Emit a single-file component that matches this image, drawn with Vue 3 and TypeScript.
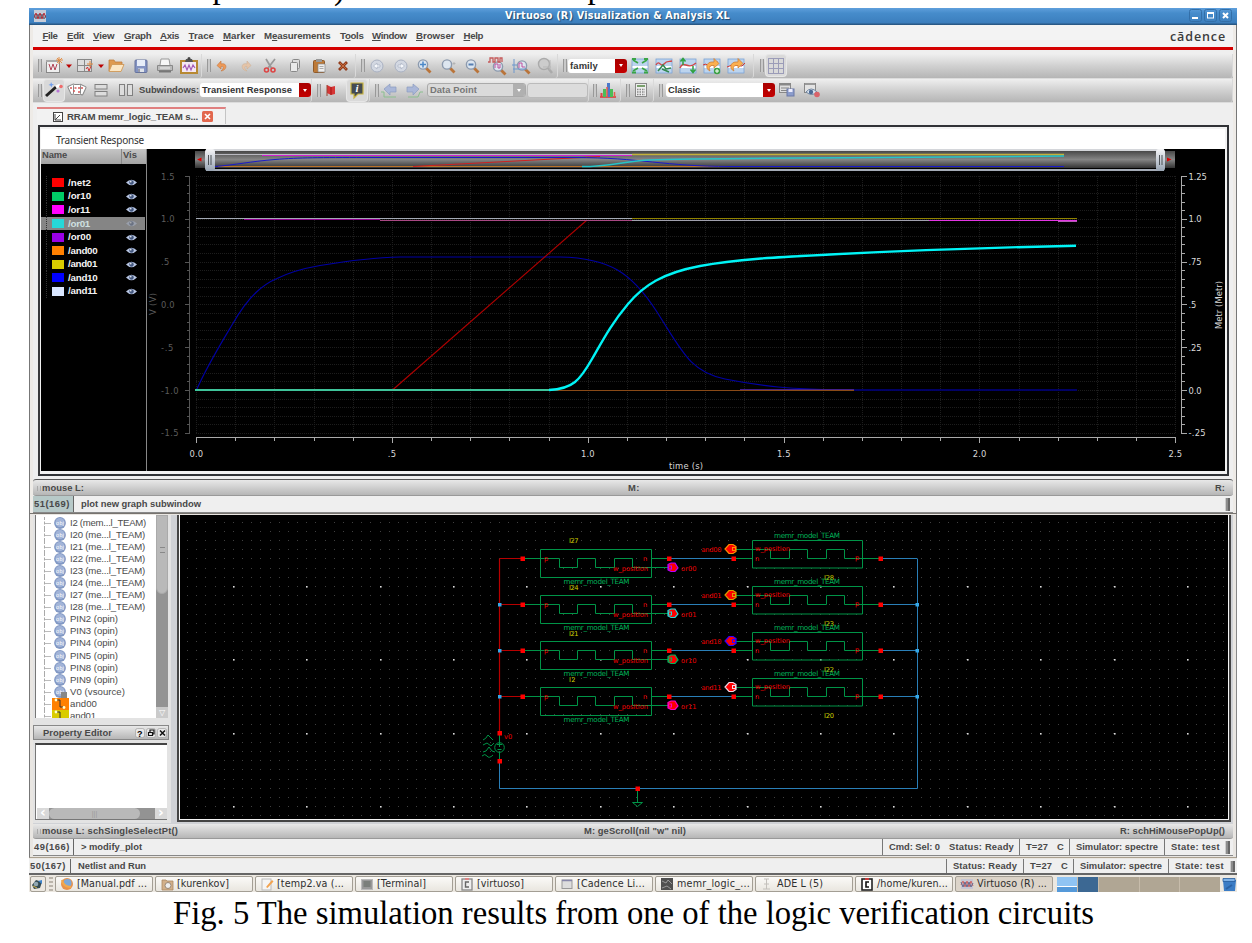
<script setup lang="ts">
interface Tool {
  kind: 'grip' | 'icon' | 'select' | 'label' | 'input'
  c: number
  w: number
  name?: string
  text?: string
  fit?: number
  on?: boolean
  off?: boolean
}
interface Group { x: number; end: number; tools: Tool[] }

// Spreads the difference between natural and wanted width over the letters.
const vFit = {
  mounted(el: HTMLElement, binding: { value: number }) {
    const natural = el.getBoundingClientRect().width
    const count = (el.textContent ?? '').length
    if (count) el.style.letterSpacing = (binding.value - natural) / count + 'px'
  },
}

const grip = (c: number): Tool => ({ kind: 'grip', c, w: 4 })
const icon = (name: string, c: number, on = false): Tool => ({ kind: 'icon', name, c, w: 20, on })
const box = (text: string, from: number, to: number, fit: number, off = false): Tool =>
  ({ kind: 'select', text, c: (from + to) / 2, w: to - from, fit, off })

const rows: Group[][] = [
  [
    { x: 33, end: 202, tools: [grip(40), icon('wave', 53.5), icon('drop', 69), icon('layout', 84.5), icon('drop', 101), icon('folder', 116), icon('save', 141), icon('print', 165), icon('clip', 189)] },
    { x: 202, end: 356, tools: [grip(209), icon('undo', 222), icon('redo', 246), icon('cut', 270), icon('copy', 295), icon('paste', 319), icon('delete', 343)] },
    { x: 356, end: 558, tools: [grip(363), icon('back', 376.5), icon('forward', 400.5), icon('zoomFit', 424), icon('zoomIn', 448), icon('zoomOut', 472), icon('zoomY', 497), icon('zoomX', 521), icon('zoomOff', 545)] },
    { x: 558, end: 754, tools: [grip(565), box('family', 568, 627, 28), icon('fitAll', 640), icon('fitCurve', 664), icon('fitUp', 688), icon('loopPlus', 712), icon('loop', 736)] },
    { x: 754, end: 1233, tools: [grip(762), icon('grid', 776, true)] },
  ],
  [
    { x: 33, end: 312, tools: [grip(40), icon('wand', 53.5, true), icon('cards', 77), icon('rows', 101), icon('cols', 126), { kind: 'label', text: 'Subwindows:', c: 169, w: 60, fit: 60 }, box('Transient Response', 200, 311, 90)] },
    { x: 312, end: 370, tools: [grip(319), icon('flag', 331), icon('info', 357, true)] },
    { x: 370, end: 589, tools: [grip(377), icon('prev', 391), icon('next', 414), box('Data Point', 427, 526, 47, true), { kind: 'input', c: 557, w: 61 }] },
    { x: 589, end: 621, tools: [grip(595), icon('histogram', 608)] },
    { x: 621, end: 654, tools: [grip(628), icon('calc', 641)] },
    { x: 654, end: 1233, tools: [grip(661), box('Classic', 666, 775, 32), icon('saveView', 787), icon('hideView', 812)] },
  ],
]
const gap = (g: Group, i: number) => {
  const t = g.tools[i]
  const p = g.tools[i - 1]
  return t.c - t.w / 2 - (p ? p.c + p.w / 2 : g.x)
}

const lens = '<path d="M12 12l4.500 4.500" stroke="#b9743a" stroke-width="2.800"/><circle cx="9" cy="8.500" r="4.600" fill="#dde6f0" stroke="#8c9aae" stroke-width="1.400"/>'
const card = '<rect x="2" y="3" width="16" height="14" fill="#bcd4ee" stroke="#7ba3d6" stroke-width=".8"/><path d="M2.500 11h15" stroke="#fff" stroke-width="2"/>'
const loopArrow = '<path d="M8 15C3 13 4 6 10 6h2V2.500l5 5-5 4.500V9.500h-2c-2.500 0-3.500 3-2 5.500z" fill="#fbb050" stroke="#cf8038" stroke-width=".8"/>'
const icons: Record<string, string> = {
  wave: '<rect x="2.500" y="5.500" width="13" height="11" fill="#eee" stroke="#888"/><path d="M2 5h14" stroke="#aaa" stroke-width="2"/><path d="M5 8l2 6 2-6 2 6 2-6" fill="none" stroke="#b34557"/><path d="M15 1v7M12 4h7M13 2l5 5M18 2l-5 5" stroke="#e2883c" stroke-width=".9"/>',
  drop: '<path d="M7 8.500h6l-3 3.500z" fill="#b00"/>',
  layout: '<rect x="2.500" y="3.500" width="14" height="12" fill="#ddd" stroke="#888"/><path d="M3 9.500h13M9.500 4v11" stroke="#888"/><path d="M11 13l1.500-2 1.500 4 2-5" fill="none" stroke="#c33"/><path d="M15 5v6M12 8h6" stroke="#e08a40"/>',
  folder: '<path d="M3 15V4h5l1 2h7v3" fill="#de9a50" stroke="#c07f3c" stroke-width=".8"/><path d="M3 15.500L6 8.500h12l-3 7z" fill="#fbe6c4" stroke="#cf9858" stroke-width=".9"/>',
  save: '<rect x="4" y="4" width="12" height="12.500" rx="1" fill="#8393c2" stroke="#66739c"/><path d="M6 4h8v6H6z" fill="#e7edf8"/><path d="M7 12.500h6V16H7z" fill="#dfe3ea"/><path d="M8 13v3" stroke="#556"/>',
  print: '<path d="M5 9l1-6h8l1 6" fill="#f7f7f7" stroke="#999"/><path d="M2.500 9.500h15v5h-15z" fill="#bbb" stroke="#888"/><path d="M4 15.500h12" stroke="#777" stroke-width="2"/><path d="M5 12h10" stroke="#eee"/>',
  clip: '<rect x="2" y="5" width="16" height="12" fill="#f4e8f4" stroke="#b78933" stroke-width="2"/><path d="M6 6l1-3h6l1 3z" fill="#555"/><circle cx="10" cy="2.500" r="1.500" fill="#444"/><path d="M4 12l2-3 2 5 2-5 2 5 2-5 2 3" fill="none" stroke="#a45ab5" stroke-width="1.200"/>',
  undo: '<path d="M9 15c7-1 6-9 0-7V5L5 9.500 9 13v-2.500c3-1 3 2 0 4.500z" fill="#ee9a58" stroke="#c4743c" stroke-width=".6"/>',
  redo: '<path d="M11 15c-7-1-6-9 0-7V5l4 4.500-4 3.500v-2.500c-3-1-3 2 0 4.500z" fill="#e5c4a8" stroke="#ccb095" stroke-width=".6"/>',
  cut: '<path d="M6 3l6 10M15 3L8 12" stroke="#999" stroke-width="1.700"/><circle cx="6.500" cy="14" r="2" fill="none" stroke="#d44" stroke-width="1.600"/><circle cx="13" cy="14" r="2" fill="none" stroke="#d44" stroke-width="1.600"/>',
  copy: '<rect x="7.500" y="3.500" width="7" height="9" rx="1" fill="#ddd" stroke="#888"/><rect x="5.500" y="6.500" width="7" height="9" rx="1" fill="#e9e9e9" stroke="#888"/>',
  paste: '<rect x="4.500" y="4.500" width="11" height="12" rx="1" fill="#bd7a38" stroke="#8f5a2a"/><path d="M7 3h6v3H7z" fill="#999"/><path d="M9 8h7v8H9z" fill="#eee" stroke="#888" stroke-width=".7"/><path d="M10.500 10.500h4M10.500 12.500h4" stroke="#aaa"/>',
  delete: '<path d="M6 6l8 8M14 6l-8 8" stroke="#923d1c" stroke-width="2.800"/><path d="M7 7l6 6M13 7l-6 6" stroke="#c56b3c"/>',
  back: '<circle cx="10" cy="10" r="6" fill="#d3d8e2" stroke="#a9b1c2"/><path d="M6.500 10l3.500-3v2h3v2h-3v2z" fill="#f6f8fc" stroke="#a9b1c2" stroke-width=".7"/>',
  forward: '<circle cx="10" cy="10" r="6" fill="#d3d8e2" stroke="#a9b1c2"/><path d="M13.500 10L10 7v2H7v2h3v2z" fill="#f6f8fc" stroke="#a9b1c2" stroke-width=".7"/>',
  zoomFit: lens + '<path d="M6 8.500h6M9 5.500v6" stroke="#4b88c8" stroke-width="1.500"/>',
  zoomIn: lens + '<path d="M16 6v3M14.500 7.500h3" stroke="#aaa" stroke-width=".7"/>',
  zoomOut: lens + '<path d="M6.500 8.500h5" stroke="#557eb2" stroke-width="2"/>',
  zoomY: '<g transform="translate(2 2)">' + lens + '</g><path d="M1 6h2V2h3v4h2V2h3v4h2V2h2v4" fill="none" stroke="#c55a5a" stroke-width="1.300"/><path d="M8 12V8h3v4h2V8" fill="none" stroke="#c0519f"/>',
  zoomX: '<g transform="translate(2 1)">' + lens + '</g><path d="M3 3v14M1 9h5M2 13h14" stroke="#6c97cc"/><path d="M8 12V7h3v4h3" fill="none" stroke="#c0519f"/>',
  zoomOff: '<circle cx="9" cy="8" r="5.500" fill="#ccc" stroke="#aaa" stroke-width="1.400"/><path d="M13 12l4 5" stroke="#aaa" stroke-width="2.500"/><path d="M15 4v10M8 11h8" stroke="#b7b7b7"/>',
  fitAll: card + '<path d="M3 4l5 3M17 4l-5 3M3 15l5-3M17 15l-5-3" stroke="#3aa545" stroke-width="1.700"/><path d="M2 3h4M14 3h4M2 16.500h4M14 16.500h4" stroke="#3aa545" stroke-width="2"/>',
  fitCurve: card + '<path d="M2 9c3-6 5 3 8-1s5-2 8-3" fill="none" stroke="#d04848" stroke-width="1.400"/><path d="M4 15l5-6 3 4 5-1M8 13l7 3" fill="none" stroke="#32884f" stroke-width="1.500"/>',
  fitUp: card + '<path d="M2 12c4-9 7 3 16-5" fill="none" stroke="#d04848" stroke-width="1.500"/><path d="M5 9V3M2.500 5.500L5 2.500 7.500 5.500M15 10v6M12.500 13.500L15 16.500 17.500 13.500" fill="none" stroke="#2fa040" stroke-width="1.500"/>',
  loopPlus: card + '<path d="M1 9l3-1 3 3 4-3 5-2" fill="none" stroke="#d03535"/>' + loopArrow + '<circle cx="15" cy="15" r="3.200" fill="#3ba043"/><path d="M13 15h4M15 13v4" stroke="#fff"/>',
  loop: card + '<path d="M1 11l5-2 10 1 3-3" fill="none" stroke="#d03535"/>' + loopArrow,
  grid: '<path d="M2.500 2v16M7.500 2v16M12.500 2v16M17.500 2v16M2 2.500h16M2 7.500h16M2 12.500h16M2 17.500h16" stroke="#9b9cb8"/>',
  wand: '<path d="M2 16L12 7" stroke="#222" stroke-width="3"/><path d="M12 7l4-2" stroke="#fff" stroke-width="3"/><path d="M7 2l1 2 2 .5-2 1-.5 2-1-2-2-.500 2-1z" fill="#6f9dec"/><circle cx="17" cy="6.500" r="1.800" fill="#ef6b6b"/><circle cx="14" cy="11" r="1.600" fill="#b978d6"/>',
  cards: '<rect x="2" y="5" width="7" height="9" rx="1" fill="#fff" stroke="#888" transform="rotate(-25 5 9)"/><rect x="11" y="5" width="7" height="9" rx="1" fill="#fff" stroke="#888" transform="rotate(25 14 9)"/><rect x="6.500" y="4.500" width="7" height="10" rx="1" fill="#fff" stroke="#888"/><path d="M3 8h2M7.500 8h2M11 8h2M14 8h2M6 11h2M11 12h2" stroke="#d85a5a" stroke-width="1.700"/>',
  rows: '<rect x="4" y="4.500" width="12" height="4.500" fill="#ddd" stroke="#808080"/><rect x="4" y="11.500" width="12" height="4.500" fill="#ddd" stroke="#808080"/>',
  cols: '<rect x="3.500" y="4.500" width="5" height="11" fill="#ddd" stroke="#808080"/><rect x="11.500" y="4.500" width="5" height="11" fill="#ddd" stroke="#808080"/>',
  flag: '<path d="M6 5l4 2 4-1v8l-4 1-4-2z" fill="#d63636"/><path d="M6 5v11" stroke="#943"/><path d="M10 7v8" stroke="#a31313"/>',
  info: '<path d="M4 3h12v11h-5l-4 4v-4H4z" fill="#444b52" stroke="#c9b541" stroke-width="1.200"/><text x="8.500" y="12" font-family="Liberation Serif, serif" font-size="11" font-weight="bold" font-style="italic" fill="#fff">i</text>',
  prev: '<path d="M3 9l6-5v3h6v5H9v3z" fill="#aab7d8" stroke="#8a9bc0" stroke-width=".7"/><path d="M0 12h3M3 12v5h12" fill="none" stroke="#8abf8e"/>',
  next: '<path d="M15 9L9 4v3H3v5h6v3z" fill="#aab7d8" stroke="#8a9bc0" stroke-width=".7"/><path d="M4 17h10l2-5h3" fill="none" stroke="#8abf8e"/>',
  histogram: '<path d="M2 17h16" stroke="#d33" stroke-width="1.500"/><path d="M3.500 17v-4" stroke="#d44" stroke-width="2"/><path d="M6.500 17V9M13.500 17V9" stroke="#4bbd57" stroke-width="3"/><path d="M10.500 17V3" stroke="#4c78ca" stroke-width="3"/><path d="M9 17V7M16.500 17v-5" stroke="#e65c4b" stroke-width="1.500"/>',
  calc: '<rect x="4.500" y="3.500" width="11" height="13" fill="#eee" stroke="#888"/><rect x="6" y="5" width="8" height="2" fill="#7aa06d"/><path d="M6 9.500h8M6 12h8M6 14.500h8" stroke="#888" stroke-width="1.300" stroke-dasharray="1.500 1"/>',
  saveView: '<rect x="2.500" y="3.500" width="11" height="9" fill="#dedede" stroke="#888"/><path d="M3 4.500h10" stroke="#888" stroke-width="2"/><path d="M4 8h8M4 10.500h8" stroke="#888"/><rect x="10" y="9" width="7" height="7" fill="#8b9ccc" stroke="#6a78a6"/><path d="M11.500 9h4v3h-4z" fill="#eef"/>',
  hideView: '<rect x="2.500" y="3.500" width="11" height="9" fill="#e3e3e3" stroke="#888"/><path d="M3 4h10" stroke="#999" stroke-width="2"/><path d="M4 12q5-6 11 0-5 5-11 0z" fill="#dbe5f1" stroke="#7085a0"/><circle cx="9" cy="12" r="2.200" fill="#4c6a94"/><circle cx="15" cy="14.500" r="2.800" fill="#d9636a"/>',
}

const menu = [
  ['', 'F', 'ile', 42.5, 57.5], ['', 'E', 'dit', 67, 84], ['', 'V', 'iew', 93, 114.5], ['', 'G', 'raph', 124, 151.5],
  ['', 'A', 'xis', 160, 179], ['', 'T', 'race', 188.5, 214], ['', 'M', 'arker', 223, 255], ['M', 'e', 'asurements', 264, 330.5],
  ['T', 'o', 'ols', 340, 363.5], ['', 'W', 'indow', 372, 406.5], ['', 'B', 'rowser', 416, 454.5], ['', 'H', 'elp', 463.5, 483],
] as [string, string, string, number, number][]

const legend = [
  ['/net2', '#ff0000', 23], ['/or10', '#00cc66', 23], ['/or11', '#ff00ff', 22], ['/or01', '#26d9d9', 22], ['/or00', '#9900e6', 23],
  ['/and00', '#ff8000', 29.5], ['/and01', '#d9cc00', 29], ['/and10', '#0000ff', 29.5], ['/and11', '#d9e6ff', 29],
] as [string, string, number][]

const X0 = 196
const seq = (n: number) => Array.from({ length: n }, (_, i) => i)
const gridY = seq(31).map(i => Math.round(176 + i * 8.56) + 0.5)
const gridX = seq(26).map(i => Math.round(196 + i * 39.17) + 0.5)
const leftLabels = ['1.5', '1.0', '.5', '0.0', '-.5', '-1.0', '-1.5']
const rightLabels = ['1.25', '1.0', '.75', '.5', '.25', '0.0', '-.25']
const xLabels = ['0.0', '.5', '1.0', '1.5', '2.0', '2.5']
const labelWidth = (s: string) => [...s].reduce((a, ch) => a + (ch === '.' ? 3 : ch === '-' ? 4 : 5.3), 0)

const smallDots = seq(114).flatMap(i => seq(33).map(j => `M${Math.round(187 + i * 9.17)} ${Math.round(521.8 + j * 9.17)}h1v1h-1z`)).join('')
const bigDots = seq(14).flatMap(i => seq(4).map(j => [Math.round(232.8 + i * 73.4), Math.round(585.8 + j * 73.4)]))

const cells = [
  { y: 558.5, l: 'I27', out: 'or00', oc: '#b400ff', and: 'and00', ac: '#ff9000', r: 'I28', dy: -16 },
  { y: 604.5, l: 'I24', out: 'or01', oc: '#26d9d9', and: 'and01', ac: '#d9a000', r: 'I23', dy: -15 },
  { y: 650.5, l: 'I21', out: 'or10', oc: '#00b35c', and: 'and10', ac: '#3300ff', r: 'I22', dy: -15 },
  { y: 696.5, l: 'I2', out: 'or11', oc: '#ff00c8', and: 'and11', ac: '#f2d9e6', r: 'I20', dy: -15 },
]

const tree = [
  ['I2 (mem...l_TEAM)', 76], ['I20 (me...l_TEAM)', 75], ['I21 (me...l_TEAM)', 75], ['I22 (me...l_TEAM)', 75], ['I23 (me...l_TEAM)', 75],
  ['I24 (me...l_TEAM)', 75], ['I27 (me...l_TEAM)', 75], ['I28 (me...l_TEAM)', 75], ['PIN2 (opin)', 48], ['PIN3 (opin)', 48], ['PIN4 (opin)', 48],
  ['PIN5 (opin)', 48], ['PIN8 (opin)', 48], ['PIN9 (opin)', 48], ['V0 (vsource)', 55], ['and00', 27], ['and01', 26],
] as [string, number][]

const tasks = [
  { t: '[Manual.pdf ...', w: 70, i: '<circle cx="7" cy="7" r="6" fill="#e8924c"/><circle cx="7.500" cy="6" r="4" fill="#7da8d8"/><path d="M2 3q1 7 9 7" fill="none" stroke="#f3a84b" stroke-width="2"/>' },
  { t: '[kurenkov]', w: 52, i: '<path d="M2 3h4l1 1h6v9H2z" fill="#d2b08a" stroke="#a98963" stroke-width=".8"/><circle cx="8" cy="8.500" r="3" fill="#eee" stroke="#987"/>' },
  { t: '[temp2.va (...', w: 67, i: '<rect x="2" y="2" width="9" height="11" fill="#f5f5f5" stroke="#bbb"/><path d="M6 10l6-7 1.500 1.500-6 6.500z" fill="#f2a350"/>' },
  { t: '[Terminal]', w: 49, i: '<rect x="1.500" y="2.500" width="11" height="10" fill="#999" stroke="#bbb"/><rect x="3.500" y="4" width="7" height="6" fill="#7b7f7b"/>' },
  { t: '[virtuoso]', w: 47, i: '<rect x="2" y="2" width="10" height="11" fill="#eee" stroke="#888" stroke-width="1.300"/><path d="M9 5H5.500v5H9" fill="none" stroke="#666" stroke-width="1.400"/><path d="M5 2h4" stroke="#e77" stroke-width="1.500"/>' },
  { t: '[Cadence Li...', w: 68, i: '<rect x="2" y="3" width="10" height="8.500" fill="#ddd" stroke="#999"/><path d="M2 3.500h10" stroke="#88a" stroke-width="1.500"/>' },
  { t: 'memr_logic_...', w: 73, i: '<rect x="1" y="1" width="12" height="12" fill="#505050"/><path d="M2 4l4 2 2-3 4 4M2 11l5-2 4 3" fill="none" stroke="#999"/>' },
  { t: 'ADE L (5)', w: 46, i: '<path d="M4 2h5M6.500 2v10M3 12h7M4 7h5" stroke="#c3c0bb"/>' },
  { t: '/home/kuren...', w: 71, i: '<rect x="2" y="2" width="10" height="11" fill="#fff" stroke="#222" stroke-width="1.600"/><path d="M9 5H6v5h3" fill="none" stroke="#111" stroke-width="1.600"/><path d="M5 2h4" stroke="#e33" stroke-width="1.500"/>' },
  { t: 'Virtuoso (R) ...', w: 70, i: '<rect x="1" y="2" width="12" height="10" fill="#c6c6d4"/><path d="M1 8l2-4 2 6 2-6 2 6 2-6 2 5" fill="none" stroke="#cc6666"/><path d="M1 5l2 5 2-5 2 5 2-5 2 5 2-4" fill="none" stroke="#66668c"/>' },
]
</script>

<template>
  <div class="page">
    <svg class="lead" width="1252" height="8" viewBox="0 0 1252 8">
      <text x="212.500" y="-2">p</text><text x="334" y="-1">)</text><text x="587.500" y="-2">p</text>
    </svg>

    <div class="desk">
      <section class="upper">
        <header class="titlebar">
          <svg class="title-icon" width="12" height="12" viewBox="0 0 12 12"><rect width="12" height="12" fill="#c6ccd8" /><path d="M0 8l2-5 2 6 2-6 2 6 2-6 2 5" fill="none" stroke="#b9303a" /><path d="M0 4l2 5 2-5 2 5 2-5 2 5 2-4" fill="none" stroke="#445" stroke-width=".7" /></svg>
          <span class="title"><span v-fit="225" class="t">Virtuoso (R) Visualization &amp; Analysis XL</span></span>
          <svg width="46" height="14" viewBox="0 0 46 14">
            <g fill="none" stroke="#336fa8"><rect x="1.500" y=".500" width="12" height="12" rx="2" /><rect x="16.500" y=".500" width="12" height="12" rx="2" /><rect x="31.500" y=".500" width="12" height="12" rx="2" /></g>
            <path d="M4 9h6" stroke="#fff" stroke-width="2" /><rect x="19.500" y="4" width="6" height="5" fill="none" stroke="#fff" /><path d="M19 4h7" stroke="#fff" stroke-width="2" /><path d="M35 4l5 5M40 4l-5 5" stroke="#fff" stroke-width="2" />
          </svg>
        </header>
        <div class="frame">
          <nav class="menu">
            <span v-for="(m, i) in menu" :key="i" class="item" :style="{ marginLeft: m[3] - (i ? menu[i - 1][4] : 33) + 'px', width: m[4] - m[3] + 'px' }"><span v-fit="m[4] - m[3]" class="t">{{ m[0] }}<u>{{ m[1] }}</u>{{ m[2] }}</span></span>
            <span class="brand"><span v-fit="56" class="t">cādence</span></span>
          </nav>
          <div class="toolbars">
            <div v-for="(row, r) in rows" :key="r" class="toolbar">
              <div v-for="(g, gi) in row" :key="gi" class="group" :style="{ width: g.end - g.x + 'px' }">
                <div v-for="(t, ti) in g.tools" :key="ti" :class="['tool', t.kind, { on: t.on, off: t.off }]" :style="{ marginLeft: gap(g, ti) + 'px', width: t.w + 'px' }">
                  <svg v-if="t.kind === 'icon'" width="20" height="20" viewBox="0 0 20 20"><g v-html="icons[t.name!]" /></svg>
                  <span v-else-if="t.text" v-fit="t.fit!" class="t">{{ t.text }}</span>
                  <i v-if="t.kind === 'select'" class="caret" />
                </div>
              </div>
            </div>
          </div>
          <div class="tabs">
            <div class="tab">
              <svg width="10" height="10" viewBox="0 0 10 10"><rect x=".500" y=".500" width="9" height="9" fill="#fff" stroke="#444" /><path d="M2 8l5-5M2 2v6h6" fill="none" stroke="#444" /></svg>
              <span v-fit="131" class="t">RRAM memr_logic_TEAM s...</span>
              <svg width="11" height="11" viewBox="0 0 11 11"><rect width="11" height="11" rx="1.500" fill="#e2674d" /><path d="M3 3l5 5M8 3L3 8" stroke="#fff" stroke-width="1.600" /></svg>
            </div>
          </div>
          <div class="graph">
            <div class="graph-title"><span v-fit="88" class="t">Transient Response</span></div>
            <div class="graph-body">
              <aside class="legend">
                <div class="legend-head"><span class="col-name"><span v-fit="25" class="t">Name</span></span><span class="col-vis"><span v-fit="14" class="t">Vis</span></span></div>
                <div v-for="(l, i) in legend" :key="i" :class="['entry', { picked: i === 3 }]">
                  <i class="branch" /><i class="swatch" :style="{ background: l[1] }" />
                  <span class="entry-name"><span v-fit="l[2]" class="t">{{ l[0] }}</span></span>
                  <svg width="11" height="7" viewBox="0 0 11 7"><path d="M0 3.500Q5.500-2 11 3.500 5.500 9 0 3.500z" fill="#b9c7e4" /><circle cx="5.500" cy="3.500" r="2.200" fill="#44587f" /><circle cx="4.800" cy="2.800" r=".8" fill="#fff" /></svg>
                </div>
              </aside>
              <svg class="plot" width="1078" height="322" viewBox="147 149 1078 322">
                <defs>
                  <linearGradient id="slide" x2="0" y2="1"><stop offset="0" stop-color="#484848" /><stop offset=".5" stop-color="#858585" /><stop offset="1" stop-color="#333" /></linearGradient>
                  <linearGradient id="knob" x2="0" y2="1"><stop offset="0" stop-color="#f5f5f7" /><stop offset="1" stop-color="#98a4b3" /></linearGradient>
                </defs>
                <rect x="195" y="151" width="980" height="17" fill="url(#slide)" />
                <rect x="206" y="149" width="958" height="2" fill="#d4d6da" /><rect x="206" y="169" width="958" height="2" fill="#a4abb6" />
                <g fill="none">
                  <path d="M262 155.500H632" stroke="#d020d0" /><path d="M215 154.500H1064" stroke="#b9b9c0" /><path d="M632 154.500H1064" stroke="#c4b13a" stroke-width="1.500" />
                  <path d="M218 166.500H730" stroke="#b8722a" /><path d="M413 166.500L600 156.500" stroke="#d02020" />
                  <path d="M215 166.500C235 165 250 161.500 275 159.500S320 157.500 365 157.500H575C640 157.500 665 166.500 730 166.500H1064" stroke="#1a1ac8" />
                  <path d="M582 166.500C610 166.500 625 161 650 160S760 158 882 157.500L1064 156" stroke="#25c5c9" stroke-width="1.500" />
                </g>
                <g><rect x="205" y="149" width="10" height="22" rx="3" fill="url(#knob)" /><rect x="1156" y="149" width="9" height="22" rx="3" fill="url(#knob)" /><path d="M208.500 155v10M211 155v10M1159.500 155v10M1162 155v10" stroke="#4b5055" /><path d="M197 159.500l4.500-2v4zM1167 157.500l4.500 2-4.500 2z" fill="#d00" /></g>
                <g stroke="#1d1d1d" stroke-dasharray="1 1">
                  <path v-for="y in gridY" :key="'h' + y" :d="`M196 ${y}H1175`" /><path v-for="x in gridX" :key="'v' + x" :d="`M${x} 176V433`" />
                </g>
                <g class="dim-axis"><path d="M189.500 176V434" /><path v-for="(y, i) in gridY" :key="y" :d="`M${i % 5 ? 187 : 185} ${y}H189`" /></g>
                <g class="axis"><path d="M196 437.500H1176M1181.500 176V434" />
                  <path v-for="(x, i) in gridX" :key="x" :d="`M${x} 437V${i % 5 ? 441 : 443}`" /><path v-for="(y, i) in gridY" :key="y" :d="`M1182 ${y}H${i % 5 ? 1185 : 1187}`" /></g>
                <g class="num dim"><text v-for="(l, i) in leftLabels" :key="i" x="161" :y="179.5 + i * 42.83" :textLength="labelWidth(l)">{{ l }}</text></g>
                <g class="num">
                  <text v-for="(l, i) in rightLabels" :key="i" x="1188.500" :y="179.5 + i * 42.83" :textLength="labelWidth(l) - 0.5">{{ l }}</text>
                  <text v-for="(l, i) in xLabels" :key="l" :x="X0 - (l === '.5' ? 4 : 6.5) + i * 195.8" y="457" :textLength="labelWidth(l)">{{ l }}</text>
                  <text x="669" y="469" textLength="34">time (s)</text>
                  <text transform="translate(1222 329) rotate(-90)" textLength="48">Metr (Metr)</text>
                </g>
                <text class="num dim" transform="translate(156 315) rotate(-90)" textLength="22">V (V)</text>
                <g fill="none">
                  <path d="M196.500 390C207 366 220 345 232 325C240 311 247 301 256 292.500C265 284 271 281 277 278.500C290 272 303 268.500 320 265.500C350 260.500 372 257.500 400 257H560C610 258 632 273 657 312S690 372 725 379 790 389.500 850 390H1077" stroke="#0000a4" stroke-width="1.100" />
                  <path d="M392.500 390L587 220" stroke="#b00000" stroke-width="1.100" />
                  <path d="M587 220.500H1077" stroke="#a0a0ad" /><path d="M196 218.500H1077" stroke="#a3aab5" />
                  <path d="M244 219.500H380" stroke="#900090" /><path d="M380 220.500H632" stroke="#a94883" /><path d="M632 218.500H1077" stroke="#908200" />
                  <path d="M929 220.500H1077" stroke="#e335e3" /><path d="M1058 221.500H1077" stroke="#b45bb4" />
                  <path d="M545 390.500H854" stroke="#8a4a17" /><path d="M740 389.500H854" stroke="#44208a" /><path d="M854 390H1077" stroke="#00006a" stroke-width="1.500" />
                  <path d="M195 390H550" stroke="#3fc49a" stroke-width="2.200" />
                  <path d="M549 390C573 389 580 380 592 359S612 323 628 304 663 273 700 266 780 257 830 254.500 960 248 1076 245.800" stroke="#00f4f6" stroke-width="2.400" />
                </g>
              </svg>
            </div>
          </div>
          <div class="mouse top"><span v-fit="47" class="t push">mouse L:</span><span v-fit="12" class="t mid-a">M:</span><span v-fit="10" class="t">R:</span></div>
          <div class="prompt"><span class="count on"><span v-fit="36" class="t">51(169)</span></span><span v-fit="120" class="t msg">plot new graph subwindow</span><i class="nub" /></div>
        </div>
      </section>

      <section class="lower">
        <div class="work">
          <aside class="dock">
            <div class="tree">
              <div class="tree-list">
                <div v-for="(n, i) in tree" :key="i" class="node">
                  <svg width="17" height="12" viewBox="0 0 17 12">
                    <template v-if="i < 15"><circle cx="8" cy="6" r="5.900" fill="#8198c4" /><circle cx="8" cy="5.500" r="4.500" fill="#a2b4d8" /><text x="4" y="7.500" font-family="Liberation Sans, sans-serif" font-size="5.500" fill="#fff" textLength="8">obj</text><rect v-if="i === 14" x="9" y="6" width="6" height="6" fill="#888" /></template>
                    <template v-else><rect width="17" height="12" :fill="i === 15 ? '#ff8000' : '#d9cc00'" /><path d="M3 2h5v7h4" fill="none" stroke="#333" /><circle cx="4" cy="2" r="1.400" fill="#ffc" /><circle cx="12" cy="9.500" r="1.400" fill="#ffc" /></template>
                  </svg>
                  <span v-fit="n[1]" class="t">{{ n[0] }}</span>
                </div>
              </div>
              <div class="vscroll"><i class="thumb"><b /></i><i class="down">▽</i></div>
            </div>
            <div class="prop-head"><span v-fit="69" class="t">Property Editor</span>
              <svg width="32" height="10" viewBox="0 0 32 10"><g fill="#e8e8e8" stroke="#999" stroke-width=".6"><rect x=".5" y=".5" width="9" height="9" rx="2" /><rect x="11.500" y=".5" width="9" height="9" rx="2" /><rect x="22.500" y=".5" width="9" height="9" rx="2" /></g><text x="2" y="8.500" font-family="Liberation Sans, sans-serif" font-weight="bold" font-size="9">?</text><path d="M15 4V2h4v4h-2M13.500 4.500h4v3h-4z" fill="none" stroke="#111" stroke-width="1.200" /><path d="M25 2.500l5 5M30 2.500l-5 5" stroke="#111" stroke-width="1.500" /></svg>
            </div>
            <div class="prop-box"><div class="hscroll"><i>‹</i><b><s>|||</s></b><i>›</i></div></div>
          </aside>
          <svg class="schematic" width="1048" height="304" viewBox="180 515 1048 304">
            <rect x="180" y="515" width="1048" height="304" fill="#000" />
            <path :d="smallDots" fill="#404040" shape-rendering="crispEdges" />
            <g fill="#ddd"><rect v-for="(d, i) in bigDots" :key="i" :x="d[0]" :y="d[1]" width="1.600" height="1.600" /></g>
            <path d="M499.500 761V788.500H917.500V558.500" fill="none" stroke="#2a7fb8" />
            <path d="M499.500 733V558.500" fill="none" stroke="#b80000" stroke-width="1.200" />
            <g v-for="c in cells" :key="c.l" :transform="`translate(0 ${c.y})`">
              <path d="M669 0H734M881 0H917" stroke="#2a7fb8" /><path d="M500 0H523" stroke="#b80000" />
              <g class="green">
                <path d="M523 0H559.500V9H577.500V0H595.500V9H614.500V0H632.500V9H672M651 0H669M540.500-9H651.500V19H540.500z" />
                <path d="M736-9H770.500V0H789.500V-9H807.500V0H826.500V-9H844.500V0H881M734 0H752M752.500-18H862.500V9.500H752.500z" />
              </g>
              <g fill="#f00"><rect x="520.500" y="-2" width="4.500" height="4.500" /><rect x="667" y="-2" width="4.500" height="4.500" /><rect x="731.500" y="-2" width="4.500" height="4.500" /><rect x="878.500" y="-2" width="4.500" height="4.500" /></g>
              <path d="M668 6l3-1.500h4L678 9.500 675 13h-4l-3-1.500z" fill="#f00" stroke-width="1.200" :stroke="c.oc" /><rect x="668.500" y="7.500" width="3" height="3" fill="none" :stroke="c.oc" />
              <path d="M736-12l-3-2h-4L725-9.500 729-5h4l3-2z" fill="#f00" stroke-width="1.200" :stroke="c.ac" /><rect x="732.500" y="-11" width="3" height="3" fill="none" :stroke="c.ac" />
              <g class="red-text"><text x="544" y="2">p</text><text x="643" y="2">n</text><text x="613" y="12" textLength="35">w_position</text><text x="681" y="12.500" textLength="15.500">{{ c.out }}</text><text x="755" y="2">n</text><text x="855" y="1.500">p</text><text x="755" y="-7.500" textLength="35">w_position</text><text x="701.500" y="-6.500" textLength="20">{{ c.and }}</text></g>
              <g class="green-text"><text x="563.500" y="25.500" textLength="66">memr_model_TEAM</text><text x="774" y="-21" textLength="66">memr_model_TEAM</text></g>
              <g class="yellow-text"><text x="569" :y="c.dy" :textLength="c.l.length * 3 + 0.5">{{ c.l }}</text><text x="824" y="21" textLength="10">{{ c.r }}</text></g>
            </g>
            <g fill="#35a8e8"><template v-for="c in cells.slice(1)" :key="c.l"><rect x="498" :y="c.y - 1.5" width="3.500" height="3.500" /><rect x="915.500" :y="c.y - 1.5" width="3.500" height="3.500" /></template></g>
            <g class="green"><path d="M499.500 735V745M499.500 752V760M637.500 789V802M632.500 802.500H642.500L637.500 806.500z" /><circle cx="499.500" cy="747.500" r="4.800" /><path d="M497 744.500h5M499.500 742v5M497.500 749.500h4" /><path d="M483 740q3-1 5-5l5 5M483 745l4-2 4 3 3-3M483 752l3-1 3-4 3 4 3 1M482 756q3-3 5 0t6-1" /></g>
            <g fill="#f00"><rect x="497.500" y="731" width="4.500" height="4.500" /><rect x="497.500" y="759" width="4.500" height="4.500" /><rect x="635.500" y="786.500" width="4.500" height="4.500" /></g>
            <g class="red-text"><text x="504" y="738.500">v0</text></g>
          </svg>
        </div>
        <div class="mouse"><span v-fit="141" class="t push">mouse L: schSingleSelectPt()</span><span v-fit="102" class="t mid-b">M: geScroll(nil "w" nil)</span><span v-fit="105" class="t">R: schHiMousePopUp()</span></div>
        <div class="prompt"><span class="count"><span v-fit="36" class="t">49(166)</span></span><span v-fit="61" class="t msg">&gt; modify_plot</span>
          <span class="cell c1"><span v-fit="51" class="t">Cmd: Sel: 0</span><span v-fit="65" class="t">Status: Ready</span></span><span class="cell c2"><span v-fit="22" class="t">T=27</span><span class="t">C</span></span><span class="cell c3"><span v-fit="82" class="t">Simulator: spectre</span></span><span class="cell c4"><span v-fit="49" class="t">State: test</span></span><i class="nub" />
        </div>
      </section>
      <div class="prompt netlist"><span class="count"><span v-fit="36" class="t">50(167)</span></span><span v-fit="68" class="t msg">Netlist and Run</span>
        <span class="cell c5"><span v-fit="64" class="t">Status: Ready</span></span><span class="cell c2"><span v-fit="22" class="t">T=27</span><span class="t">C</span></span><span class="cell c6"><span v-fit="82" class="t">Simulator: spectre</span></span><span class="cell c7"><span v-fit="49" class="t">State: test</span></span><i class="nub" />
      </div>
      <footer class="taskbar">
        <div class="launcher"><svg width="13" height="12" viewBox="0 0 13 12"><path d="M1 7l4-5 6 2-2 6-6 1z" fill="#344b53" /><circle cx="5" cy="6" r="2.300" fill="#91a8b3" /><path d="M7 3l4-1v4z" fill="#3d83ca" /><path d="M2 8l4 2" stroke="#d8b64a" /></svg></div>
        <i class="dots" />
        <div v-for="(k, i) in tasks" :key="i" :class="['task', { active: i === 9 }]"><svg width="14" height="14" viewBox="0 0 14 14"><g v-html="k.i" /></svg><span v-fit="k.w" class="t">{{ k.t }}</span></div>
        <div class="pager"><i class="p1" /><i class="p2" /><i /><i /><i /></div>
        <svg width="15" height="15" viewBox="0 0 15 15"><path d="M1 3h13l-1 11H2z" fill="#3b7cc5" /><path d="M1 1.500h12v3H1z" fill="#7eb1e7" stroke="#235b9c" stroke-width=".8" /><path d="M4 12l6-4" stroke="#2b62a5" stroke-width="2" /></svg>
      </footer>
    </div>
    <p class="caption"><span v-fit="921" class="t">Fig. 5 The simulation results from one of the logic verification circuits</span></p>
  </div>
</template>

<style>
body { margin: 0; background: #fff; }
</style>
<style scoped>
.page { width: 1252px; height: 943px; overflow: hidden; background: #fff; font: bold 9.4px/12px "Liberation Sans", Arial, sans-serif; color: #484848; box-sizing: border-box; }
.page *, .page *::before { box-sizing: border-box; }
svg { display: block; flex: none; }
.t { display: inline-block; white-space: pre; flex: none; }
.lead { font: 32.7px "Liberation Serif", serif; }
.desk { width: 1208px; margin-left: 29px; height: 884px; display: flex; flex-direction: column; background: #e9e6e2; }
.upper { height: 506px; border-right: 1px solid #777; border-left: 1px solid #777; border-bottom: 1px solid #77736e; flex: none; display: flex; flex-direction: column; background: #eeebe7; }
.titlebar { height: 17px; flex: none; margin: 0 -1px; background: linear-gradient(#5f9fdc 0, #468ccb 30%, #3c7fbe 85%, #244f78 100%); display: flex; align-items: center; padding: 0 3px 1px 5px; }
.title { flex: 1; padding-left: 459px; color: #fff; font: bold 9.6px/12px "DejaVu Sans", sans-serif; text-shadow: 1px 1px 1px #1e476d; }
.frame { margin: 0 3px; width: 1200px; height: 487px; background: #efefef; display: flex; flex-direction: column; }
.menu { height: 25px; flex: none; background: #f3f3f3; border-bottom: 3px solid #d40000; display: flex; align-items: center; font-size: 9.7px; }
.item { flex: none; height: 12px; white-space: nowrap; }
.menu u { text-underline-offset: 1px; text-decoration-thickness: 1px; }
.brand { margin-left: auto; margin-right: 7px; font: 600 12.5px/15px "Open Sans", "Noto Sans", sans-serif; color: #3b3b3b; }
.toolbars { height: 53px; padding-top: 4px; flex: none; }
.toolbar { height: 24.5px; display: flex; background: linear-gradient(#efefef, #d0d0d0 50%, #b5b5b5); border-bottom: 1px solid #dcdcdc; }
.group { height: 100%; display: flex; align-items: center; flex: none; border-right: 1px solid #d9d9d9; border-radius: 0 0 3px 3px; }
.tool { flex: none; display: flex; align-items: center; height: 21px; }
.grip { height: 13px; border-left: 1px solid #999; border-right: 1px solid #999; background: #c9c9c9; }
.on.icon { background: #d9d9d9; border-radius: 3px; box-shadow: 0 0 0 1px #e6e6e6; }
.select { height: 14px; background: #fff; border-radius: 3px; padding-left: 2px; color: #333; justify-content: space-between; overflow: hidden; }
.caret { width: 12px; height: 14px; background: linear-gradient(#a80000, #c40000); display: flex; justify-content: center; align-items: center; }
.caret::before { content: ""; border: 2.5px solid transparent; border-top: 3px solid #fff; border-bottom: 0; }
.select.off { background: #dadada; color: #777; border: 1px solid #aaa; }
.select.off .caret { background: #b0b0b0; }
.input { height: 15px; background: #dcdcdc; border: 1px solid #bbb; border-radius: 3px; }
.tabs { height: 22px; flex: none; padding: 4px 0 0 4px; }
.tab { width: 189px; height: 17px; border-top: 2px solid #e08080; border-right: 1px solid #c4c4c4; background: #f2f2f2; display: flex; align-items: center; padding-left: 16px; gap: 4px; font-size: 9.7px; }
.graph { height: 351px; flex: none; margin: 0 4px 0 5px; padding: 2px 0 2px 1px; border: 2px solid #303236; border-left-color: #3a3a3c; background: #f2f2f2; }
.graph-title { height: 20px; width: 1184px; background: #fff; padding: 5px 0 0 15px; font: 10px/12px "Noto Sans", sans-serif; color: #333; }
.graph-body { display: flex; height: 322px; width: 1184px; background: #000; }
.legend { width: 106px; border-right: 1px solid #888; flex: none; }
.legend-head { height: 15px; margin-bottom: 12px; background: linear-gradient(#c5c5c5, #a3a3a3); display: flex; color: #4a4a4a; }
.col-name { width: 81px; border-right: 1px solid #888; padding-left: 1px; }
.col-vis { padding-left: 1px; }
.entry { height: 13.58px; display: flex; align-items: center; color: #f4f4f4; font-size: 9.8px; width: 104px; padding-left: 5px; }
.entry.picked { background: #858585; color: #cfe0e0; }
.picked svg { opacity: .4; }
.branch { width: 3px; height: 13px; border-left: 1px dotted #333; margin-right: 3px; }
.swatch { width: 12px; height: 9px; }
.entry-name { width: 62px; padding-left: 4px; }
.num { font: 9.3px "DejaVu Sans Condensed", "DejaVu Sans", sans-serif; fill: #d8d8d8; }
.dim { fill: #5c5c5c; }
.axis { stroke: #aaa; }
.dim-axis { stroke: #555; }
.mouse { height: 15px; flex: none; background: linear-gradient(#e8e8e8, #b6b6b6); border-bottom: 1px solid #999; border-radius: 3px; display: flex; align-items: center; padding: 0 8px 0 4px; }
.mouse.top { margin-top: 3px; border-top: 1px solid #555; height: 17px; }
.mouse .t:last-child { margin-left: auto; }
.push::before { content: ""; display: inline-block; width: 4px; height: 5px; margin-right: 1px; border-left: 1px solid #aaa; border-right: 1px solid #aaa; }
.mid-a { margin-left: 544px; }
.mid-b { margin-left: 406px; }
.prompt { height: 17px; flex: none; background: #efefef; display: flex; align-items: stretch; line-height: 15px; border-bottom: 1px solid #888; }
.count { width: 41px; padding-left: 1px; border-right: 1px solid #666; margin-right: 7px; flex: none; }
.count.on { background: #b7c9c8; }
.nub { width: 5px; margin: 2px 3px 1px auto; background: #8c8c8c; border-left: 1px solid #ccc; border-right: 2px solid #666; }
.cell { border-left: 1px solid #777; padding-left: 6px; flex: none; white-space: nowrap; }
.c1 { margin-left: auto; width: 137px; display: flex; gap: 9px; }
.c2 { width: 50px; display: flex; gap: 9px; padding-left: 6px; }
.c3 { width: 95px; }
.c4 { width: 61px; }
.c1 ~ .nub { margin-left: 0; }
.lower { height: 344px; flex: none; border-left: 1px solid #777; border-right: 1px solid #888; padding: 1px 3px 0 3px; border-bottom: 1px solid #aaa08f; display: flex; flex-direction: column; }
.work { height: 309px; display: flex; flex: none; background: #d0d2d6; }
.dock { width: 138px; height: 308px; flex: none; background: #e3e3e3; padding-left: 2px; }
.tree { height: 203px; width: 133px; border-left: 1px solid #777; display: flex; background: #fff; }
.tree-list { width: 120px; height: 203px; overflow: hidden; padding: 2px 0 0 8px; }
.node { height: 12.05px; border-left: 1px dashed #aaa; display: flex; align-items: center; gap: 1px; padding-left: 7px; font-weight: normal; font-size: 9.6px; color: #4b4b4b; background: linear-gradient(#bbb, #bbb) 0 6px / 6px 1px no-repeat; }
.vscroll { width: 12px; background: #939393; display: flex; flex-direction: column; justify-content: space-between; }
.thumb { height: 79px; background: #b9b9b9; border: 1px solid #aaa; border-radius: 0 0 6px 6px; display: flex; justify-content: center; }
.thumb b { margin-top: 31px; height: 6px; width: 5px; border-top: 1px solid #888; border-bottom: 1px solid #888; }
.down { height: 11px; background: #cacaca; color: #fff; font: 8px/11px "DejaVu Sans", sans-serif; text-align: center; }
.prop-head { height: 15px; margin: 7px 2px 0 -2px; background: linear-gradient(#e8e8e8, #b6b6b6); border: 1px solid #888; display: flex; align-items: center; justify-content: space-between; padding: 0 1px 0 9px; }
.prop-box { margin-top: 3px; width: 132px; height: 77px; background: #fff; border: 1px solid #777; border-top: 2px solid #444; border-right: 0; display: flex; align-items: flex-end; }
.hscroll { width: 130px; height: 11px; margin-left: 1px; background: #939393; display: flex; justify-content: space-between; }
.hscroll i { width: 12px; background: #d9d9d9; color: #fff; font: bold 14px/9px "DejaVu Sans", sans-serif; text-align: center; }
.hscroll b { width: 91px; margin-right: auto; background: #b9b9b9; border-radius: 6px; text-align: center; line-height: 10px; }
.hscroll s { font: 7px/10px "Liberation Sans", sans-serif; color: #999; text-decoration: none; }
.schematic { margin-left: 9px; outline: 1px solid #f5f5f5; box-shadow: 0 0 0 3px #444; clip-path: inset(0 -4px -4px -4px); }
.green { stroke: #009447; fill: none; }
.red-text, .green-text, .yellow-text { font: 6.7px "DejaVu Sans", sans-serif; }
.red-text { fill: #f00000; }
.green-text { fill: #00b058; font-size: 7.2px; }
.yellow-text { fill: #d0d000; }
.netlist { height: 16px; margin-top: 1px; border-bottom: 2px solid #666; line-height: 14px; }
.netlist .count { width: 42px; }
.c5 { margin-left: auto; width: 77px; }
.c6 { width: 95px; }
.c7 { width: 62px; }
.c5 ~ .nub { margin-left: 0; margin-right: 2px; }
.taskbar { flex: 1; background: #ece8e1; display: flex; align-items: center; padding: 1px 0 0 1px; }
.launcher { width: 16px; height: 16px; border: 1px solid #a39e94; border-radius: 2px; display: flex; align-items: center; justify-content: center; margin-right: 3px; }
.dots { width: 4px; height: 14px; border-left: 2px dotted #bbb5ab; border-right: 2px dotted #bbb5ab; margin-right: 2.5px; }
.task { width: 98px; height: 16px; margin-right: 2px; flex: none; border: 1px solid #a39e94; border-radius: 2px; background: linear-gradient(#fbfaf8, #e9e6df); display: flex; align-items: center; padding-left: 4px; gap: 3px; font: 9.6px/12px "DejaVu Sans", sans-serif; color: #2e2e2e; }
.task.active { background: #dcd4c9; }
.pager { display: flex; gap: 1px; width: 163px; height: 15px; margin: 0 2px 0 2px; background: #c7bcab; }
.pager i { width: 40px; background: #b0a694; }
.pager .p1 { width: 20px; background: linear-gradient(#90c4f3 58%, #fff 58%, #fff 64%, #5599d9 64%); }
.pager .p2 { width: 20px; background: #3c6893; }
.caption { margin: 0 0 0 173px; height: 45px; font: 32.7px/42px "Liberation Serif", serif; color: #000; white-space: nowrap; }
</style>
